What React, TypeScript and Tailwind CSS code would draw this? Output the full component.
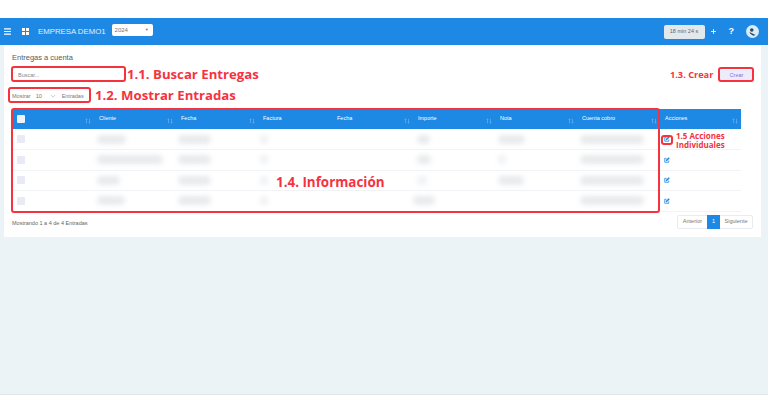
import React from 'react';
import { Menu, Plus } from 'lucide-react';

type Row = { cliente: number; fecha: number; factura: number; importe: number; nota: number; cuenta: number };

const rows: Row[] = [
    { cliente: 29, fecha: 33, factura: 8, importe: 13, nota: 27, cuenta: 64 },
    { cliente: 66, fecha: 33, factura: 8, importe: 14, nota: 8, cuenta: 64 },
    { cliente: 23, fecha: 33, factura: 8, importe: 10, nota: 26, cuenta: 64 },
    { cliente: 28, fecha: 33, factura: 8, importe: 22, nota: 0, cuenta: 64 },
];

const SortIcon = () => (
    <svg viewBox="0 0 8 8" className="absolute right-[3px] top-[9px] w-[6px] h-[6px] text-[#6aaeea]" fill="none" stroke="currentColor" strokeWidth="1">
        <path d="M2 7V1M1 2.5 2 1l1 1.5M6 1v6M5 5.5 6 7l1-1.5" />
    </svg>
);

const Blur = ({ w, light }: { w: number; light?: boolean }) =>
    w > 0 ? <div className={`h-[9px] rounded-full blur-[2.5px] ${light ? 'bg-[#f0f1f3]' : 'bg-[#e8eaec]'}`} style={{ width: w }} /> : null;

const EditIcon = () => (
    <svg viewBox="0 0 12 12" className="w-[6px] h-[6px] text-[#1e88e5]" fill="none" stroke="currentColor" strokeWidth="1.6">
        <path d="M9.5 7v3.5H1.5V2.5H5" />
        <path d="M3.5 8.5 4 5.5 9.5.5l2 2-5.5 5.5z" fill="currentColor" stroke="none" />
    </svg>
);

const headers = ['', 'Cliente', 'Fecha', 'Factura', 'Fecha', 'Importe', 'Nota', 'Cuenta cobro', 'Acciones'];
const widths = ['w-[82px]', 'w-[82px]', 'w-[82px]', 'w-[74px]', 'w-[81px]', 'w-[82px]', 'w-[82px]', 'w-[83px]', 'w-[81px]'];

const Annotation = ({ className, children }: { className: string; children: React.ReactNode }) => (
    <div className={`absolute font-bold text-[#f5333f] ${className}`}>{children}</div>
);

const Frame = ({ className }: { className: string }) => (
    <div className={`absolute border-2 border-[#f5333f] rounded-[3px] pointer-events-none ${className}`} />
);

export default function App() {
    return (
        <div className="relative w-[768px] h-[413px] overflow-hidden bg-white pt-[18px] font-['Liberation_Sans',sans-serif] text-[#555b61]">
            <div className="h-[377px] bg-[#ecf3f6] border-b border-[#dfe6e8] flex flex-col">
                <header className="h-[27px] bg-[#1e88e5] flex items-center text-white shrink-0">
                    <Menu size={9} className="ml-[3px]" strokeWidth={3} />
                    <div className="ml-[10px] grid grid-cols-2 gap-[1px] w-[7px] h-[7px]">
                        <span className="bg-white" />
                        <span className="bg-white" />
                        <span className="bg-white" />
                        <span className="bg-white" />
                    </div>
                    <span className="ml-[9px] text-[7.8px] text-[#e3f0fb]">EMPRESA DEMO1</span>
                    <div className="ml-[6px] w-[41px] h-[12px] -mt-[3px] bg-white rounded-[2px] flex items-center justify-between pl-[3px] pr-[4px] text-[6px] text-[#777]">
                        <span>2024</span>
                        <span className="text-[4px]">▼</span>
                    </div>
                    <div className="ml-auto w-[41px] h-[14px] bg-[#e3e8ec] rounded-[2px] flex items-center justify-center text-[5.5px] text-[#666]">
                        18 min 24 s
                    </div>
                    <Plus size={7} strokeWidth={3} className="ml-[5px]" />
                    <span className="ml-[12px] text-[9px] font-bold">?</span>
                    <div className="ml-[12px] mr-[9px] w-[13px] h-[13px] rounded-full bg-[#dcebf5] flex items-center justify-center">
                        <svg viewBox="0 0 12 12" className="w-[9px] h-[9px] text-[#1f4e6e]" fill="currentColor">
                            <circle cx="5" cy="4" r="2.4" />
                            <path d="M2 6.5 10 10.5 7 11.5 3 9z" />
                        </svg>
                    </div>
                </header>

                <main className="ml-[4px] mr-[7px] h-[192px] bg-white pl-[8px] pr-[7px] pt-[8px]">
                    <h1 className="text-[7.5px] leading-[9px] text-[#555b61]">Entregas a cuenta</h1>

                    <div className="mt-[6px] flex justify-between items-center h-[14px]">
                        <div className="ml-[6px] text-[5.5px] text-[#888]">Buscar...</div>
                        <button className="mr-[1px] w-[33px] h-[11px] rounded-[2px] bg-[#eeebfb] text-[5.5px] text-[#7f72e0]">Crear</button>
                    </div>

                    <div className="mt-[7px] flex items-center text-[5.5px] text-[#777] h-[14px]">
                        <span>Mostrar</span>
                        <div className="w-[31px] flex justify-between items-center pl-[5px] pr-[6px]">
                            <span>10</span>
                            <svg viewBox="0 0 8 5" className="w-[6px] h-[4px] text-[#bbb]" fill="none" stroke="currentColor"><path d="M1 1l3 3 3-3" /></svg>
                        </div>
                        <span>Entradas</span>
                    </div>

                    <table className="mt-[6px] border-collapse table-fixed w-[729px]">
                        <thead>
                            <tr className="h-[20px] bg-[#1e88e5] text-white">
                                {headers.map((h, i) => (
                                    <th key={i} className={`relative ${widths[i]} pl-[5px] pb-[1px] text-left text-[5.5px] font-normal`}>
                                        {i === 0 ? <span className="block w-[8px] h-[8px] rounded-[1px] bg-[#eef2fb]" /> : h}
                                        {i !== 3 && <SortIcon />}
                                    </th>
                                ))}
                            </tr>
                        </thead>
                        <tbody>
                            {rows.map((row, i) => (
                                <tr key={i} className="h-[20.5px] border-b border-[#f1f3f6]">
                                    <td className="pl-[5px]"><div className="w-[8px] h-[8px] rounded-[1px] bg-[#e8eaf5]" /></td>
                                    <td className="pl-[3px]"><Blur w={row.cliente} /></td>
                                    <td className="pl-[2px]"><Blur w={row.fecha} /></td>
                                    <td className="pl-[2px]"><Blur w={row.factura} light /></td>
                                    <td />
                                    <td className={i === 3 ? 'pl-0' : 'pl-[4px]'}><Blur w={row.importe} light={i === 2} /></td>
                                    <td className="pl-[3px]"><Blur w={row.nota} light={i === 1} /></td>
                                    <td className="pl-[3px]"><Blur w={row.cuenta} /></td>
                                    <td className="pl-[4px]"><EditIcon /></td>
                                </tr>
                            ))}
                        </tbody>
                    </table>

                    <div className="mt-[3px] flex justify-between items-start">
                        <span className="mt-[4px] text-[5.5px] text-[#666]">Mostrando 1 a 4 de 4 Entradas</span>
                        <div className="mr-[1px] flex h-[14px] text-[5.5px] text-[#777] border border-[#e8ebef] rounded-[2px] items-center">
                            <span className="w-[29px] text-center">Anterior</span>
                            <span className="w-[13px] h-[14px] bg-[#1e88e5] text-white flex items-center justify-center">1</span>
                            <span className="w-[32px] text-center">Siguiente</span>
                        </div>
                    </div>
                </main>
            </div>

            {/* anotaciones rojas sobre la captura */}
            <Frame className="left-[11px] top-[66px] w-[115px] h-[16px]" />
            <Frame className="left-[8px] top-[87px] w-[83px] h-[16px]" />
            <Frame className="left-[718px] top-[67px] w-[36px] h-[15px]" />
            <Frame className="left-[11px] top-[108px] w-[649px] h-[105px]" />
            <Frame className="left-[661px] top-[135px] w-[12px] h-[10px]" />
            <div className="font-['Open_Sans',sans-serif]">
                <Annotation className="left-[127px] top-[66px] text-[13.2px] leading-[16px]">1.1. Buscar Entregas</Annotation>
                <Annotation className="left-[95px] top-[87px] text-[13.2px] leading-[16px]">1.2. Mostrar Entradas</Annotation>
                <Annotation className="left-[670px] top-[69px] text-[9.2px] leading-[11px]">1.3. Crear</Annotation>
                <Annotation className="left-[276px] top-[174px] text-[13.4px] leading-[16px]">1.4. Información</Annotation>
                <Annotation className="left-[676px] top-[131px] text-[8px] leading-[9px]">1.5 Acciones<br />Individuales</Annotation>
            </div>
        </div>
    );
}
